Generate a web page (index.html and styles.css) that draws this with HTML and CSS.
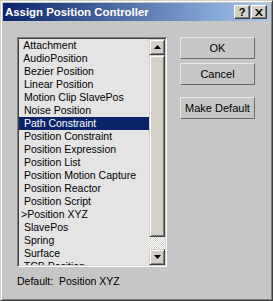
FILE: index.html
```html
<!DOCTYPE html>
<html>
<head>
<meta charset="utf-8">
<link rel="stylesheet" href="styles.css">
</head>
<body>
<div class="window">
  <div class="titlebar">
    <span class="title">Assign Position Controller</span>
    <div class="tb-btns">
      <div class="tb-btn">?</div>
      <div class="tb-btn close">
        <svg width="8" height="7" viewBox="0 0 8 7"><path d="M0 0h2l2 2.5 2-2.5h2l-3 3.5 3 3.5h-2l-2-2.5-2 2.5h-2l3-3.5z" fill="#000"/></svg>
      </div>
    </div>
  </div>
  <div class="content">
    <div class="main-row">
      <div class="listbox">
        <ul class="items">
          <li> Attachment</li>
          <li> AudioPosition</li>
          <li> Bezier Position</li>
          <li> Linear Position</li>
          <li> Motion Clip SlavePos</li>
          <li> Noise Position</li>
          <li class="selected"> Path Constraint</li>
          <li> Position Constraint</li>
          <li> Position Expression</li>
          <li> Position List</li>
          <li> Position Motion Capture</li>
          <li> Position Reactor</li>
          <li> Position Script</li>
          <li>&gt;Position XYZ</li>
          <li> SlavePos</li>
          <li> Spring</li>
          <li> Surface</li>
          <li> TCB Position</li>
        </ul>
        <div class="scrollbar">
          <div class="sb-btn"><svg width="7" height="4" viewBox="0 0 7 4"><path d="M3.5 0L7 4H0z" fill="#000"/></svg></div>
          <div class="sb-thumb"></div>
          <div class="sb-track"></div>
          <div class="sb-btn"><svg width="7" height="4" viewBox="0 0 7 4"><path d="M0 0h7L3.5 4z" fill="#000"/></svg></div>
        </div>
      </div>
      <div class="buttons">
        <div class="btn">OK</div>
        <div class="btn">Cancel</div>
        <div class="btn spaced">Make Default</div>
      </div>
    </div>
    <div class="default-line">Default:&nbsp; Position XYZ</div>
  </div>
</div>
</body>
</html>
```
FILE: styles.css
```css
* { box-sizing: border-box; }
html, body { margin: 0; padding: 0; }
body {
  width: 273px;
  height: 301px;
  overflow: hidden;
  font-family: "Liberation Sans", Arial, sans-serif;
}
.window {
  width: 273px;
  height: 301px;
  background: #c6c6c6;
  border: 1px solid;
  border-color: #d4d0c8 #404040 #404040 #d4d0c8;
  box-shadow: inset 1px 1px #fff, inset -1px -1px #808080;
  padding: 2px 3px 2px 2px;
  display: flex;
  flex-direction: column;
}
.titlebar {
  height: 18px;
  background: linear-gradient(to right, #0a246a, #a6caf0);
  display: flex;
  align-items: center;
  justify-content: space-between;
  padding: 0 2px 0 2px;
}
.title {
  color: #fff;
  font-weight: bold;
  font-size: 11.4px;
  line-height: 18px;
  white-space: nowrap;
}
.tb-btns {
  display: flex;
  gap: 1px;
}
.tb-btn {
  width: 16px;
  height: 14px;
  background: #d4d0c8;
  border: 1px solid;
  border-color: #fff #404040 #404040 #fff;
  box-shadow: inset -1px -1px #808080;
  font-size: 11px;
  font-weight: bold;
  line-height: 12px;
  text-align: center;
  color: #000;
  display: flex;
  align-items: center;
  justify-content: center;
}
.content {
  padding: 16px 0 0 14px;
  flex: 1;
  display: flex;
  flex-direction: column;
}
.main-row {
  display: flex;
  gap: 13px;
  align-items: flex-start;
}
.listbox {
  width: 150px;
  height: 230px;
  border: 1px solid;
  border-color: #808080 #fff #fff #808080;
  box-shadow: inset 1px 1px #404040, inset -1px -1px #d4d0c8;
  padding: 1px;
  display: flex;
  background: #e4e4e4;
}
.items {
  list-style: none;
  margin: 0;
  padding: 0;
  width: 130px;
  height: 226px;
  overflow: hidden;
  font-size: 10.5px;
  line-height: 13px;
  color: #000;
}
.items li {
  height: 13px;
  padding-left: 2px;
  white-space: pre;
}
.items li.selected {
  background: #0a246a;
  color: #fff;
}
.scrollbar {
  width: 16px;
  height: 226px;
  display: flex;
  flex-direction: column;
}
.sb-btn, .sb-thumb {
  background: #d4d0c8;
  border: 1px solid;
  border-color: #d4d0c8 #404040 #404040 #d4d0c8;
  box-shadow: inset 1px 1px #fff, inset -1px -1px #808080;
}
.sb-btn {
  height: 16px;
  display: flex;
  align-items: center;
  justify-content: center;
}
.sb-thumb {
  height: 182px;
}
.sb-track {
  flex: 1;
  background: repeating-conic-gradient(#d4d0c8 0 25%, #fff 0 50%) 0 0 / 2px 2px;
}
.buttons {
  width: 75px;
  display: flex;
  flex-direction: column;
  gap: 4px;
}
.btn {
  height: 22px;
  border: 1px solid;
  border-color: #e8e8e8 #6a6a6a #6a6a6a #e8e8e8;
  font-size: 11px;
  line-height: 20px;
  text-align: center;
  color: #000;
}
.btn.spaced {
  margin-top: 8px;
}
.default-line {
  margin-top: 8px;
  font-size: 10.5px;
  line-height: 13px;
  color: #000;
  white-space: nowrap;
}
```
